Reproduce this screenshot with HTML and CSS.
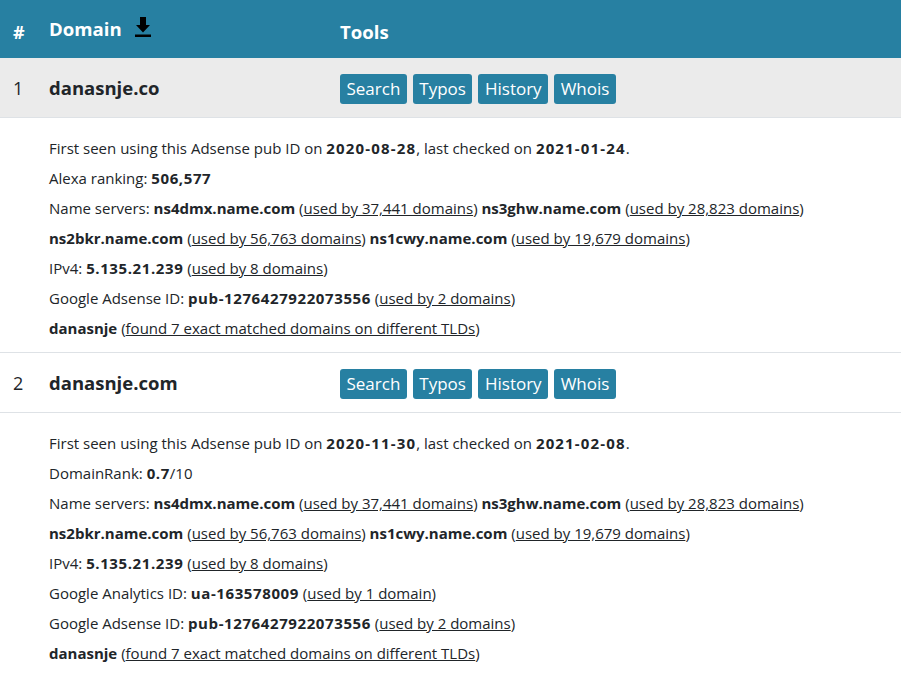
FILE: index.html
```html
<!DOCTYPE html>
<html>
<head>
<meta charset="utf-8">
<link rel="stylesheet" href="styles.css">
</head>
<body>
<div class="table">
  <div class="row head">
    <div class="cell num">#</div>
    <div class="cell dom">Domain <svg class="dl" viewBox="0 0 16 20" width="16" height="20"><path d="M5 0h6v8h4l-7 7.5L1 8h4z" fill="#000"/><rect x="0" y="17.5" width="16" height="2.5" fill="#000"/></svg></div>
    <div class="cell tools">Tools</div>
  </div>

  <div class="row main shaded">
    <div class="cell num">1</div>
    <div class="cell dom"><b>danasnje.co</b></div>
    <div class="cell tools"><a class="btn">Search</a><a class="btn">Typos</a><a class="btn">History</a><a class="btn">Whois</a></div>
  </div>
  <div class="details">
    <div class="line">First seen using this Adsense pub ID on <b class="date">2020-08-28</b>, last checked on <b class="date">2021-01-24</b>.</div>
    <div class="line">Alexa ranking: <b class="num">506,577</b></div>
    <div class="line">Name servers: <b>ns4dmx.name.com</b> (<a>used by 37,441 domains</a>) <b>ns3ghw.name.com</b> (<a>used by 28,823 domains</a>)</div>
    <div class="line"><b>ns2bkr.name.com</b> (<a>used by 56,763 domains</a>) <b>ns1cwy.name.com</b> (<a>used by 19,679 domains</a>)</div>
    <div class="line">IPv4: <b class="num">5.135.21.239</b> (<a>used by 8 domains</a>)</div>
    <div class="line">Google Adsense ID: <b class="num">pub-1276427922073556</b> (<a>used by 2 domains</a>)</div>
    <div class="line"><b>danasnje</b> (<a>found 7 exact matched domains on different TLDs</a>)</div>
  </div>

  <div class="row main">
    <div class="cell num">2</div>
    <div class="cell dom"><b>danasnje.com</b></div>
    <div class="cell tools"><a class="btn">Search</a><a class="btn">Typos</a><a class="btn">History</a><a class="btn">Whois</a></div>
  </div>
  <div class="details">
    <div class="line">First seen using this Adsense pub ID on <b class="date">2020-11-30</b>, last checked on <b class="date">2021-02-08</b>.</div>
    <div class="line">DomainRank: <b class="num">0.7</b>/10</div>
    <div class="line">Name servers: <b>ns4dmx.name.com</b> (<a>used by 37,441 domains</a>) <b>ns3ghw.name.com</b> (<a>used by 28,823 domains</a>)</div>
    <div class="line"><b>ns2bkr.name.com</b> (<a>used by 56,763 domains</a>) <b>ns1cwy.name.com</b> (<a>used by 19,679 domains</a>)</div>
    <div class="line">IPv4: <b class="num">5.135.21.239</b> (<a>used by 8 domains</a>)</div>
    <div class="line">Google Analytics ID: <b class="num">ua-163578009</b> (<a>used by 1 domain</a>)</div>
    <div class="line">Google Adsense ID: <b class="num">pub-1276427922073556</b> (<a>used by 2 domains</a>)</div>
    <div class="line"><b>danasnje</b> (<a>found 7 exact matched domains on different TLDs</a>)</div>
  </div>
</div>
</body>
</html>
```
FILE: styles.css
```css
html, body {
  margin: 0;
  padding: 0;
  background: #fff;
}
body {
  font-family: "Open Sans", "Noto Sans", sans-serif;
  color: #212529;
  font-size: 15px;
}
.table {
  width: 901px;
}
.row {
  display: grid;
  grid-template-columns: 36px 291px 1fr;
  align-items: center;
}
.cell {
  padding: 0 13px;
}
.head {
  height: 58px;
  background: #2780a2;
  color: #fff;
  font-weight: 700;
  font-size: 18.6px;
}
.head .cell.num { padding-top: 5px; font-size: 18px; }
.head .cell.tools { padding-top: 5px; }
.head .dom {
  display: flex;
  align-items: center;
  gap: 13px;
  padding-bottom: 1px;
}
.dl { display: block; margin-top: -4px; }
.main {
  height: 59px;
  border-bottom: 1px solid #dee2e6;
}
.main + .details + .main { border-top: 1px solid #dee2e6; }
.shaded {
  background: #ebebeb;
}
.main .num {
  font-size: 18px;
}
.main .dom {
  font-size: 18.5px;
  margin-top: -1px;
}
.main .tools {
  display: flex;
  gap: 6px;
  padding-top: 3px;
}
.btn {
  background: #2780a2;
  color: #fff;
  font-size: 17px;
  line-height: 30px;
  padding: 0 6.5px;
  border-radius: 3px;
}
.details {
  padding: 15px 13px 9px 49px;
}
.line {
  line-height: 30px;
  white-space: nowrap;
}
.line b { font-weight: 700; }
.line b.date { letter-spacing: 1.15px; }
.line b.num { letter-spacing: 0.6px; }
.line a {
  text-decoration: underline;
  color: #212529;
}
```
